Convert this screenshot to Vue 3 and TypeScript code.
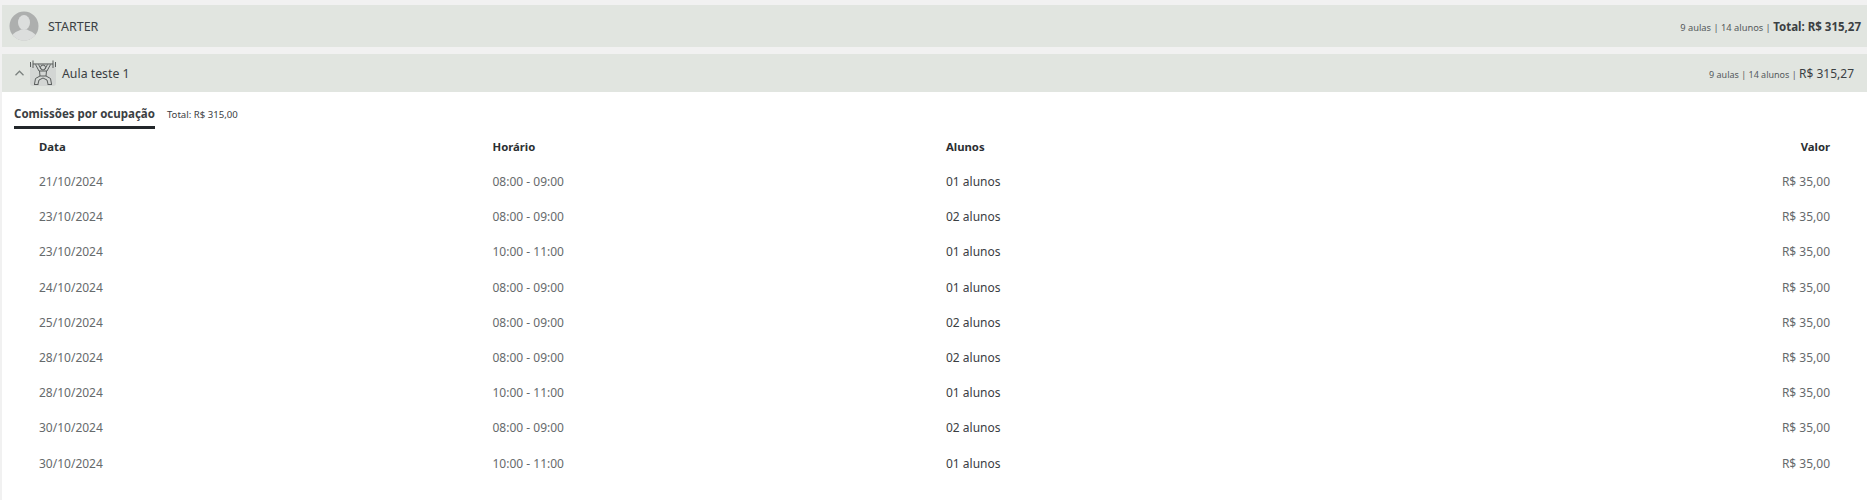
<script setup lang="ts">
interface Row { date: string; time: string; students: string; value: string }
const rows: Row[] = [
  { date: '21/10/2024', time: '08:00 - 09:00', students: '01 alunos', value: 'R$ 35,00' },
  { date: '23/10/2024', time: '08:00 - 09:00', students: '02 alunos', value: 'R$ 35,00' },
  { date: '23/10/2024', time: '10:00 - 11:00', students: '01 alunos', value: 'R$ 35,00' },
  { date: '24/10/2024', time: '08:00 - 09:00', students: '01 alunos', value: 'R$ 35,00' },
  { date: '25/10/2024', time: '08:00 - 09:00', students: '02 alunos', value: 'R$ 35,00' },
  { date: '28/10/2024', time: '08:00 - 09:00', students: '02 alunos', value: 'R$ 35,00' },
  { date: '28/10/2024', time: '10:00 - 11:00', students: '01 alunos', value: 'R$ 35,00' },
  { date: '30/10/2024', time: '08:00 - 09:00', students: '02 alunos', value: 'R$ 35,00' },
  { date: '30/10/2024', time: '10:00 - 11:00', students: '01 alunos', value: 'R$ 35,00' },
]
</script>

<template>
  <div class="page">
    <header class="bar plan">
      <svg class="avatar" viewBox="0 0 30 30" aria-hidden="true">
        <circle cx="15" cy="15" r="14.5" fill="#adafae" />
        <ellipse cx="15" cy="11.5" rx="6" ry="7.5" fill="#dcdedd" />
        <path d="M3.5 24 C6 20.5 10 20 12 18.5 L18 18.5 C20 20 24 20.5 26.5 24 A14.5 14.5 0 0 1 3.5 24Z" fill="#dcdedd" />
      </svg>
      <span class="plan-name">STARTER</span>
      <span class="summary">
        <span class="meta">9 aulas | 14 alunos | </span><strong class="grand">Total: R$ 315,27</strong>
      </span>
    </header>

    <header class="bar lesson">
      <svg class="chevron" viewBox="0 0 9 6" aria-hidden="true">
        <path d="M0.5 5.2 L4.5 1.2 L8.5 5.2" fill="none" stroke="#7b827f" stroke-width="1.3" />
      </svg>
      <svg class="lesson-icon" viewBox="0 0 26 26" aria-hidden="true">
        <rect y="3" width="26" height="23" rx="3" fill="#d3d6d4" />
        <g fill="none" stroke="#5a5e5d" stroke-width="1">
          <path d="M0.5 2 V7 M3 0.5 V8 M23 0.5 V8 M25.5 2 V7 M3 4 H23" />
          <circle cx="13" cy="7.5" r="2.5" />
          <path d="M5.5 4.5 L9 11 H17 L20.5 4.5" />
          <path d="M8.5 4.5 L11 9 M17.5 4.5 L15 9" />
          <path d="M9.5 11 L10 16 L5.5 18.5 L4.5 24 M16.5 11 L16 16 L20.5 18.5 L21.5 24" />
          <path d="M10 16 H16 M8 24 L9 20 L13 18 L17 20 L18 24 M4 24.5 H8.5 M17.5 24.5 H22" />
        </g>
      </svg>
      <span class="lesson-name">Aula teste 1</span>
      <span class="summary lesson-summary">
        <span class="meta">9 aulas | 14 alunos | </span><span class="amount">R$ 315,27</span>
      </span>
    </header>

    <main class="content">
      <div class="tabs">
        <span class="tab">Comissões por ocupação</span>
        <span class="tab-total">Total: R$ 315,00</span>
      </div>
      <div class="table">
        <div class="row head">
          <span>Data</span><span>Horário</span><span>Alunos</span><span class="end">Valor</span>
        </div>
        <div v-for="(r, i) in rows" :key="i" class="row">
          <span>{{ r.date }}</span>
          <span class="time">{{ r.time }}</span>
          <span class="students">{{ r.students }}</span>
          <span class="end">{{ r.value }}</span>
        </div>
      </div>
    </main>
  </div>
</template>

<style scoped>
.page {
  height: 500px;
  overflow: hidden;
  padding: 5px 0 0 2px;
  box-sizing: border-box;
  background: #f1f1f1;
  font-family: "Noto Sans", "Open Sans", sans-serif;
  color: #3b4043;
}
.bar {
  display: flex;
  align-items: center;
  background: #e1e5e0;
}
.plan {
  height: 42px;
  margin-bottom: 7px;
  padding: 0 6px 0 7px;
}
.avatar {
  width: 30px;
  height: 30px;
  margin-right: 9px;
  flex: none;
}
.plan-name {
  font-size: 12.5px;
}
.summary {
  margin-left: auto;
  display: flex;
  align-items: baseline;
  white-space: pre;
}
.meta {
  font-size: 9.3px;
  color: #555a5c;
}
.grand {
  font-size: 11.5px;
  font-weight: 700;
}
.lesson {
  height: 38px;
  padding: 0 0 0 13px;
}
.chevron {
  width: 9px;
  height: 6px;
  margin-right: 6px;
  flex: none;
}
.lesson-icon {
  width: 26px;
  height: 26px;
  margin: 0 6px 0 0;
  flex: none;
}
.lesson-name {
  font-size: 12.3px;
}
.lesson-summary {
  margin-right: 13px;
}
.lesson-summary .meta {
  font-size: 9px;
}
.amount {
  font-size: 12px;
}
.content {
  background: #fff;
  height: 408px;
}
.tabs {
  display: flex;
  align-items: center;
  padding: 14px 0 0 12px;
}
.tab {
  font-size: 11.5px;
  font-weight: 700;
  padding-bottom: 4px;
  border-bottom: 3px solid #22262a;
  line-height: 16px;
}
.tab-total {
  font-size: 9.6px;
  margin: 0 0 7px 12px;
}
.table {
  margin-top: 1px;
  padding: 0 37px 0 37px;
}
.row {
  display: grid;
  grid-template-columns: 453.5px 453.5px 1fr 200px;
  height: 35.2px;
  align-items: center;
  font-size: 12px;
  color: #666a6c;
}
.head {
  height: 34px;
  padding-bottom: 2px;
  box-sizing: border-box;
  font-size: 11.3px;
  color: #2b2f32;
  font-weight: 700;
}
.students {
  color: #3b4043;
}
.end {
  text-align: right;
}
</style>
